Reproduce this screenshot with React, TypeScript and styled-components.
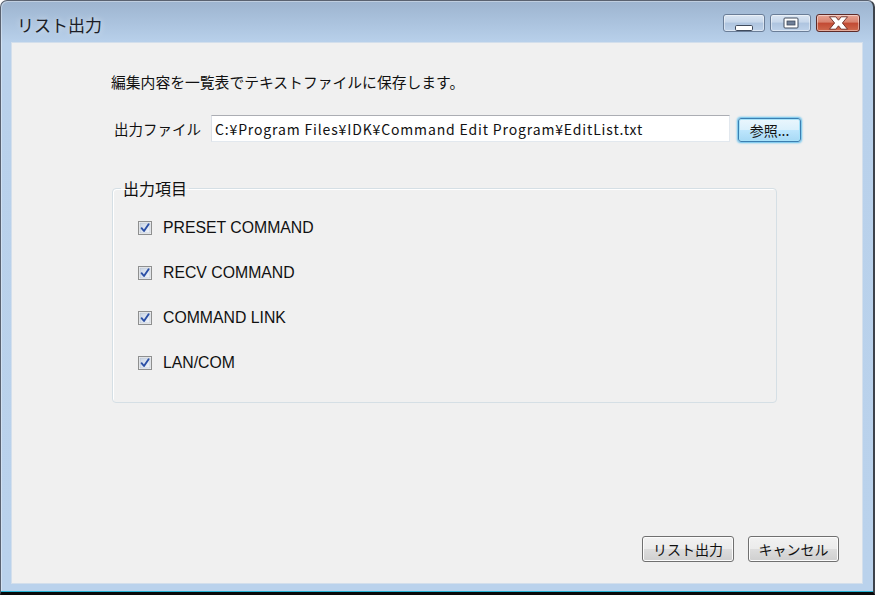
import React from "react";
import styled, { createGlobalStyle } from "styled-components";

const Global = createGlobalStyle`
  html, body { margin: 0; padding: 0; background: #ffffff; overflow: hidden; }
  body { font-family: "Noto Sans CJK JP", "Noto Sans", sans-serif; }
  * { box-sizing: border-box; }
`;

const Window = styled.div`
  width: 875px;
  height: 595px;
  display: flex;
  flex-direction: column;
  border-top: 1px solid #5a6270;
  border-left: 1px solid #5a6270;
  border-right: 2px solid #3d434c;
  border-bottom: 3px solid #0a0a0a;
  border-top-left-radius: 7px;
  border-top-right-radius: 7px;
  padding: 0 10px 8px 10px;
  background: linear-gradient(to bottom, #9db4cf 0px, #adc5e0 25px, #b9d1eb 42px, #bad2ec 100%);
  box-shadow: inset 0 -1px 0 #27b4d4, inset 1px 1px 0 rgba(255,255,255,0.35);
`;

const TitleBar = styled.div`
  height: 41px;
  display: flex;
  align-items: flex-start;
  justify-content: space-between;
  flex-shrink: 0;
`;

const Title = styled.div`
  margin: 14px 0 0 6px;
  font-size: 17px;
  line-height: 20px;
  color: #1b1d26;
  text-shadow: 0 0 6px rgba(255,255,255,0.7);
`;

const Controls = styled.div`
  display: flex;
  gap: 5px;
  margin: 13px 3px 0 0;
`;

const CtrlButton = styled.div<{ $close?: boolean; $w: number }>`
  width: ${(p) => p.$w}px;
  height: 18px;
  border-radius: 3px;
  border: 1px solid ${(p) => (p.$close ? "#5d2a28" : "#6a7d97")};
  display: flex;
  align-items: center;
  justify-content: center;
  background: ${(p) =>
    p.$close
      ? "linear-gradient(to bottom, #e8a394 0%, #d8836f 45%, #c24a33 50%, #cf6a4e 100%)"
      : "linear-gradient(to bottom, #dbe6f3 0%, #c6d6ea 45%, #aec4df 50%, #bed2ea 100%)"};
  box-shadow: inset 0 0 0 1px rgba(255,255,255,0.45);
`;

const Content = styled.div`
  flex: 1;
  display: flex;
  flex-direction: column;
  background: #f0f0f0;
  border: 1px solid #d3dfec;
`;

const Description = styled.div`
  margin: 29px 0 0 99px;
  font-size: 14.8px;
  line-height: 20px;
  color: #111;
`;

const FileRow = styled.div`
  display: flex;
  align-items: center;
  margin: 23px 0 0 102px;
`;

const FieldLabel = styled.div`
  width: 97px;
  font-size: 14.5px;
  line-height: 20px;
  color: #111;
`;

const PathInput = styled.div`
  width: 519px;
  height: 27px;
  background: #ffffff;
  border: 1px solid #e2e8ee;
  border-top-color: #abadb3;
  border-left-color: #dbdfe6;
  padding: 0 0 0 3px;
  display: flex;
  align-items: center;
  font-size: 14px;
  letter-spacing: 0.85px;
  color: #111;
  white-space: nowrap;
`;

const Button = styled.div<{ $focused?: boolean; $w: number; $h: number }>`
  width: ${(p) => p.$w}px;
  height: ${(p) => p.$h}px;
  display: flex;
  align-items: center;
  justify-content: center;
  font-size: 14px;
  color: #111;
  border-radius: 3px;
  border: 1px solid ${(p) => (p.$focused ? "#3c7fb1" : "#707070")};
  background: ${(p) =>
    p.$focused
      ? "linear-gradient(to bottom, #eaf6fd 0%, #d9f0fc 50%, #bee6fd 50%, #a7d9f5 100%)"
      : "linear-gradient(to bottom, #f2f2f2 0%, #ebebeb 50%, #dddddd 50%, #cfcfcf 100%)"};
  box-shadow: ${(p) =>
    p.$focused
      ? "inset 0 0 0 1px #a8e3fa, 0 0 2px 1px #5fbfed"
      : "inset 0 0 0 1px #fcfcfc"};
`;

const BrowseButton = styled(Button)`
  margin-left: 8px;
  margin-top: 3px;
`;

const Group = styled.fieldset`
  margin: 36px 0 0 100px;
  width: 665px;
  padding: 0;
  border: 1px solid #d5dfe5;
  border-radius: 4px;
  box-shadow: 1px 1px 0 #ffffff inset;
`;

const Legend = styled.legend`
  margin-left: 8px;
  padding: 0 2px;
  font-size: 16px;
  line-height: 20px;
  color: #111;
`;

const CheckList = styled.div`
  display: flex;
  flex-direction: column;
  gap: 21px;
  padding: 18px 0 27px 25px;
`;

const CheckRow = styled.div`
  height: 24px;
  display: flex;
  align-items: center;
  gap: 11px;
  font-family: "Liberation Sans", Arial, sans-serif;
  font-size: 15.8px;
  color: #111;
`;

const Footer = styled.div`
  margin-top: auto;
  display: flex;
  justify-content: flex-end;
  gap: 14px;
  padding: 0 23px 21px 0;
`;

const CheckBox = () => (
  <svg width="14" height="14" viewBox="0 0 14 14">
    <defs>
      <linearGradient id="cbg" x1="0" y1="0" x2="1" y2="1">
        <stop offset="0" stopColor="#c7d3e4" />
        <stop offset="1" stopColor="#f4f7fb" />
      </linearGradient>
    </defs>
    <rect x="0.5" y="0.5" width="13" height="13" fill="#f4f4f4" stroke="#8e8f8f" />
    <rect x="2" y="2" width="10" height="10" fill="url(#cbg)" stroke="#b5bfcc" strokeWidth="0.6" />
    <path d="M3.6 7.2 L6 10 L10.6 3.2" fill="none" stroke="#2a4fa6" strokeWidth="1.9" strokeLinecap="round" strokeLinejoin="round" />
  </svg>
);

const MinIcon = () => (
  <svg width="18" height="8" viewBox="0 0 18 8" style={{ marginTop: 9 }}>
    <rect x="0.5" y="1.5" width="17" height="5" rx="1.2" fill="#ffffff" stroke="#3f4a5c" />
  </svg>
);

const MaxIcon = () => (
  <svg width="16" height="12" viewBox="0 0 16 12">
    <rect x="1" y="1" width="14" height="10" rx="1" fill="#ffffff" stroke="#3f4a5c" />
    <rect x="4" y="4" width="8" height="4" fill="#6f7f98" stroke="#3f4a5c" strokeWidth="0.8" />
  </svg>
);

const CloseIcon = () => (
  <svg width="21" height="14" viewBox="0 0 21 14">
    <path d="M1.5 0.8 L7.8 0.8 L10.5 4.2 L13.2 0.8 L19.5 0.8 L14.4 7 L19.5 13.2 L13.2 13.2 L10.5 9.8 L7.8 13.2 L1.5 13.2 L6.6 7 Z" fill="#ffffff" stroke="#6a2a24" strokeWidth="0.9" strokeLinejoin="round" />
  </svg>
);

const items = ["PRESET COMMAND", "RECV COMMAND", "COMMAND LINK", "LAN/COM"];

export default function App() {
  return (
    <>
      <Global />
      <Window>
        <TitleBar>
          <Title>リスト出力</Title>
          <Controls>
            <CtrlButton $w={42}>
              <MinIcon />
            </CtrlButton>
            <CtrlButton $w={41}>
              <MaxIcon />
            </CtrlButton>
            <CtrlButton $w={44} $close>
              <CloseIcon />
            </CtrlButton>
          </Controls>
        </TitleBar>
        <Content>
          <Description>編集内容を一覧表でテキストファイルに保存します。</Description>
          <FileRow>
            <FieldLabel>出力ファイル</FieldLabel>
            <PathInput>C:¥Program Files¥IDK¥Command Edit Program¥EditList.txt</PathInput>
            <BrowseButton $focused $w={63} $h={24}>参照...</BrowseButton>
          </FileRow>
          <Group>
            <Legend>出力項目</Legend>
            <CheckList>
              {items.map((it) => (
                <CheckRow key={it}>
                  <CheckBox />
                  <span>{it}</span>
                </CheckRow>
              ))}
            </CheckList>
          </Group>
          <Footer>
            <Button $w={92} $h={26}>リスト出力</Button>
            <Button $w={91} $h={26}>キャンセル</Button>
          </Footer>
        </Content>
      </Window>
    </>
  );
}
